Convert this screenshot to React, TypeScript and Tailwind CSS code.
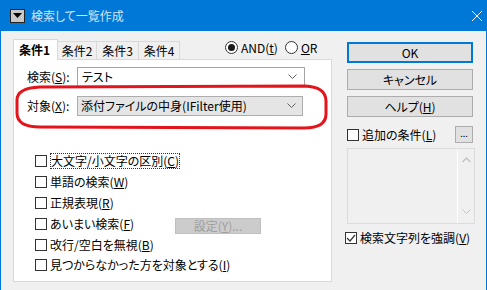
const FONT = "font-['Noto_Sans_CJK_JP',sans-serif] [font-feature-settings:'palt']";

function CheckBox({ checked = false }: { checked?: boolean }) {
  return (
    <span className="w-[12px] h-[12px] border border-[#333] bg-white flex items-center justify-center shrink-0">
      {checked && (
        <svg width="10" height="10" viewBox="0 0 10 10">
          <path d="M1 5 L4 8 L9 2" stroke="#333" strokeWidth="1.2" fill="none" />
        </svg>
      )}
    </span>
  );
}

function Radio({ checked = false }: { checked?: boolean }) {
  return (
    <span className="w-[13px] h-[13px] rounded-full border border-[#333] bg-white flex items-center justify-center shrink-0">
      {checked && <span className="w-[7px] h-[7px] rounded-full bg-[#1a1a1a]" />}
    </span>
  );
}

function Chevron({ color = "#606060" }: { color?: string }) {
  return (
    <svg width="9" height="6" viewBox="0 0 9 6">
      <path d="M0.5 0.5 L4.5 4.5 L8.5 0.5" stroke={color} strokeWidth="1" fill="none" />
    </svg>
  );
}

const options = [
  { label: <>大文字/小文字の区別(<u>C</u>)</>, focus: true },
  { label: <>単語の検索(<u>W</u>)</> },
  { label: <>正規表現(<u>R</u>)</> },
  { label: <>あいまい検索(<u>F</u>)</>, button: true },
  { label: <>改行/空白を無視(<u>B</u>)</> },
  { label: <>見つからなかった方を対象とする(<u>I</u>)</> },
];

export default function App() {
  return (
    <div className={`relative w-[487px] h-[290px] flex flex-col overflow-hidden text-[12px] text-black leading-none ${FONT}`}>
      {/* title bar */}
      <div className="h-[31px] bg-[#0078d7] flex items-center pl-[10px] pr-[4px] shrink-0">
        <span className="w-[15px] h-[14px] bg-[#c8c8c8] border border-[#222] flex items-center justify-center">
          <svg width="9" height="5" viewBox="0 0 9 5">
            <path d="M0 0 H9 L4.5 5 Z" fill="#000" />
          </svg>
        </span>
        <span className="ml-[6px] text-[12px] text-[#d6e4f5]">検索して一覧作成</span>
        <svg className="ml-auto mr-[1px]" width="10" height="10" viewBox="0 0 10 10">
          <path d="M0 0 L10 10 M10 0 L0 10" stroke="#fff" strokeWidth="1" />
        </svg>
      </div>

      {/* body */}
      <div className="flex-1 bg-[#f0f0f0] border-x border-[#0078d7] flex pl-[12px] pt-[8px]">
        {/* left: tabs */}
        <div className="w-[319px] flex flex-col">
          <div className="h-[20px] flex items-end">
            <div className="h-[21px] w-[45px] -mb-px relative z-10 bg-white border border-b-0 border-[#d9d9d9] flex items-center pl-[5px] font-bold text-[12px]">
              条件1
            </div>
            {["条件2", "条件3", "条件4"].map((t, i) => (
              <div
                key={t}
                className={`h-[18px] bg-[#f0f0f0] border border-b-0 border-[#d9d9d9] flex items-center justify-center -ml-px ${
                  i === 0 ? "w-[40px]" : i === 1 ? "w-[43px]" : "w-[42px]"
                }`}
              >
                {t}
              </div>
            ))}
            <div className="self-start mt-[2px] ml-[45px] flex items-center">
              <Radio checked />
              <span className="ml-[3px]">AND(<u>t</u>)</span>
              <span className="ml-[7px]">
                <Radio />
              </span>
              <span className="ml-[3px]"><u>O</u>R</span>
            </div>
          </div>

          <div className="h-[223px] bg-white border border-[#d9d9d9] pl-[13px] pt-[7px] flex flex-col">
            <div className="flex items-center h-[20px]">
              <span className="w-[50px]">検索(<u>S</u>):</span>
              <div className="w-[228px] h-[20px] bg-white border border-[#a5a5a5] flex items-center pl-[4px] pr-[7px]">
                <span>テスト</span>
                <span className="ml-auto"><Chevron /></span>
              </div>
            </div>
            <div className="flex items-center h-[20px] mt-[9px]">
              <span className="w-[50px]">対象(<u>X</u>):</span>
              <div className="w-[226px] h-[20px] bg-[#e5e5e5] border border-[#adadad] flex items-center pl-[3px] pr-[6px]">
                <span>添付ファイルの中身(IFilter使用)</span>
                <span className="ml-auto"><Chevron /></span>
              </div>
            </div>

            <div className="mt-[35px] pl-[8px] flex flex-col">
              {options.map((o, i) => (
                <div key={i} className="h-[20.8px] flex items-center">
                  <CheckBox />
                  {o.button ? (
                    <>
                      <span className="ml-[3px] w-[125px]">{o.label}</span>
                      <span className="w-[86px] h-[16px] mt-[5px] bg-[#cccccc] border border-[#bfbfbf] text-[#a0a0a0] flex items-center justify-center">
                        設定(<u>Y</u>)...
                      </span>
                    </>
                  ) : (
                    <span className={`ml-[3px] ${o.focus ? "border border-dotted border-[#333] py-px" : ""}`}>{o.label}</span>
                  )}
                </div>
              ))}
            </div>
          </div>
        </div>

        {/* right: buttons */}
        <div className="ml-[15px] w-[128px] flex flex-col">
          <div className="mt-[3px] w-[126px] h-[21px] bg-[#e1e1e1] border-2 border-[#0078d7] flex items-center justify-center">OK</div>
          <div className="mt-[6px] w-[126px] h-[21px] bg-[#e1e1e1] border border-[#adadad] flex items-center justify-center">キャンセル</div>
          <div className="mt-[6px] w-[126px] h-[21px] bg-[#e1e1e1] border border-[#adadad] flex items-center justify-center">ヘルプ(<u>H</u>)</div>

          <div className="mt-[9px] h-[17px] w-[126px] flex items-center">
            <CheckBox />
            <span className="ml-[3px]">追加の条件(<u>L</u>)</span>
            <span className="ml-auto w-[18px] h-[17px] bg-[#e1e1e1] border border-[#adadad] flex items-end justify-center pb-[4px] text-[9px]">...</span>
          </div>

          <div className="mt-[5px] h-[76px] w-[128px] bg-[#f0f0f0] border border-[#dcdcdc] flex justify-end">
            <div className="w-[17px] border-l border-white flex flex-col items-center justify-between py-[8px]">
              <svg width="9" height="6" viewBox="0 0 9 6">
                <path d="M0.5 5 L4.5 1 L8.5 5" stroke="#c2c2c2" strokeWidth="1.3" fill="none" />
              </svg>
              <Chevron color="#c2c2c2" />
            </div>
          </div>

          <div className="mt-[6px] h-[16px] flex items-center -ml-[2px]">
            <CheckBox checked />
            <span className="ml-[3px]">検索文字列を強調(<u>V</u>)</span>
          </div>
        </div>
      </div>

      {/* red annotation */}
      <svg className="absolute left-0 top-0 pointer-events-none" width="487" height="290">
        <path
          d="M40 87 L305 86 Q326 87 326 101 L326 114 Q326 128 304 128 L40 127 Q17 127 17 113 L17 100 Q17 88 40 87 Z"
          stroke="#e3141c"
          strokeWidth="3"
          fill="none"
        />
      </svg>
    </div>
  );
}
